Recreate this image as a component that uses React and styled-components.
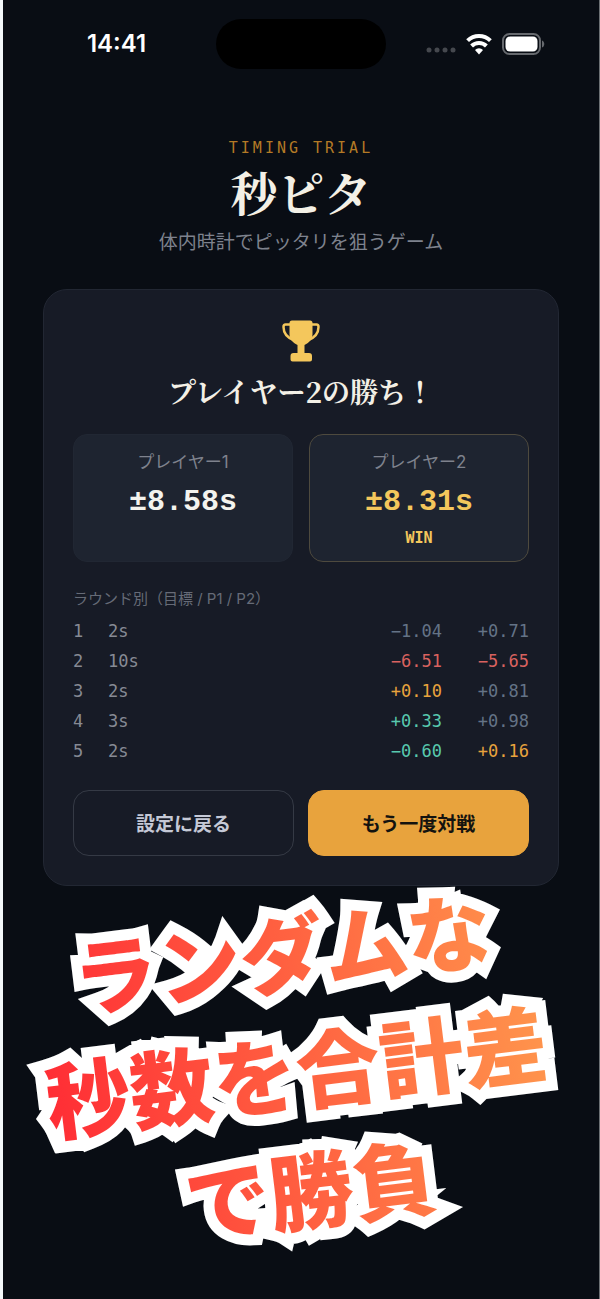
import React from 'react';
import styled, { createGlobalStyle } from 'styled-components';

const GlobalStyle = createGlobalStyle`
  * {
    box-sizing: border-box;
  }
  body {
    margin: 0;
    background: #090d14;
  }
`;

const sans = '"Inter", "Noto Sans CJK JP", sans-serif';
const japanese = '"Noto Sans CJK JP", sans-serif';
const serif = '"Noto Serif CJK JP", "Noto Sans CJK JP", serif';
const mono = '"DejaVu Sans Mono", monospace';
const scoreMono = '"Liberation Mono", monospace';

const Screen = styled.div`
  min-height: 100vh;
  overflow: hidden;
  border-left: 3px solid #f4f8fa;
  border-right: 1px solid #6c7074;
  background: #090d14;
  font-family: ${sans};
`;

const StatusBar = styled.div`
  display: grid;
  grid-template-columns: 1fr 170px 1fr;
  align-items: center;
  padding: 19px 0 0;
`;

const Clock = styled.time`
  padding-left: 14px;
  text-align: center;
  color: #fff;
  font-size: 24px;
  font-weight: 600;
  line-height: 30px;
`;

const Island = styled.div`
  height: 50px;
  border-radius: 25px;
  background: #000;
`;

const StatusIcons = styled.div`
  display: flex;
  align-items: center;
  justify-content: flex-end;
  gap: 10px;
  padding-right: 54px;
`;

const Header = styled.header`
  display: flex;
  flex-direction: column;
  align-items: center;
  margin-top: 69px;
`;

const Eyebrow = styled.p`
  margin: 0;
  color: #b47a26;
  font-family: ${mono};
  font-size: 15px;
  line-height: 20px;
  letter-spacing: 3px;
`;

const Title = styled.h1`
  margin: 3px 0 0;
  color: #f3f0e6;
  font-family: ${serif};
  font-size: 47px;
  font-weight: 700;
  line-height: 60px;
`;

const Subtitle = styled.p`
  margin: 7px 0 0;
  color: #7e828d;
  font-family: ${japanese};
  font-size: 19px;
  line-height: 26px;
`;

const Card = styled.main`
  margin: 35px 40px 0;
  padding: 30px 29px 29px;
  border: 1px solid #222733;
  border-radius: 24px;
  background: #171b26;
`;

const Trophy = styled.svg`
  display: block;
  margin: 0 auto;
`;

const Winner = styled.h2`
  margin: 9px 0 0;
  text-align: center;
  color: #f3f0e6;
  font-family: ${serif};
  font-size: 28px;
  font-weight: 700;
  line-height: 40px;
`;

const Scores = styled.div`
  display: grid;
  grid-template-columns: 1fr 1fr;
  gap: 16px;
  margin-top: 23px;
`;

const ScoreBox = styled.section`
  min-height: 128px;
  padding: 15px 8px 12px;
  border: 1px solid ${(props) => (props.$win ? '#4e4a3e' : '#212733')};
  border-radius: 14px;
  background: #1e2430;
  text-align: center;
`;

const PlayerName = styled.h3`
  margin: 0;
  color: #7e828d;
  font-size: 17px;
  font-weight: 400;
  line-height: 24px;
`;

const ScoreValue = styled.p`
  margin: 9px 0 0;
  color: ${(props) => (props.$win ? '#f4c75c' : '#f3f3ee')};
  font-family: ${scoreMono};
  font-size: 30px;
  font-weight: 700;
  line-height: 38px;
`;

const WinTag = styled.p`
  margin: 7px 0 0;
  color: #f4c75c;
  font-family: ${mono};
  font-size: 15px;
  font-weight: 700;
  line-height: 20px;
`;

const Rounds = styled.table`
  width: 100%;
  margin-top: 24px;
  border-collapse: collapse;
  table-layout: fixed;
  font-family: ${mono};
  font-size: 17px;
`;

const RoundsCaption = styled.caption`
  padding-bottom: 4px;
  text-align: left;
  color: #666b77;
  font-family: ${sans};
  font-size: 15px;
  line-height: 26px;
`;

const RoundCell = styled.td`
  width: ${(props) => props.$width || 'auto'};
  height: 30px;
  padding: 0;
  color: #868a94;
  line-height: 30px;
`;

const tones = {
  plain: '#647386',
  bad: '#d9625f',
  best: '#e8a33d',
  good: '#58c9ae',
};

const DiffCell = styled(RoundCell)`
  text-align: right;
  color: ${(props) => tones[props.$tone]};
`;

const Actions = styled.div`
  display: grid;
  grid-template-columns: 1fr 1fr;
  gap: 14px;
  margin-top: 24px;
`;

const Button = styled.button`
  height: 66px;
  padding: 0 8px 2px;
  border: 1px solid #353a45;
  border-radius: 16px;
  background: transparent;
  color: #c5c9d6;
  font-family: ${japanese};
  font-size: 19px;
  font-weight: 700;
  cursor: pointer;
`;

const PrimaryButton = styled(Button)`
  border-color: #e8a33d;
  background: #e8a33d;
  color: #14130f;
`;

const Tilt = styled.div`
  display: flex;
  justify-content: center;
  margin-top: 3px;
  padding-right: 10px;
  transform: rotate(-7deg);
`;

const Slogan = styled.p`
  position: relative;
  margin: 0;
  background: linear-gradient(90deg, #ff2d35, #ff944c);
  background-clip: text;
  -webkit-text-fill-color: transparent;
  font-family: ${japanese};
  font-size: 84px;
  font-weight: 900;
  line-height: 119px;
  text-align: center;
  white-space: pre;

  /* white outline behind the gradient letters */
  &::before {
    content: attr(data-text);
    position: absolute;
    inset: 0;
    z-index: -1;
    -webkit-text-fill-color: #fff;
    -webkit-text-stroke: 22px #fff;
  }
`;

const slogan = 'ランダムな\n秒数を合計差\nで勝負';

const rounds = [
  { target: '2s', p1: ['−1.04', 'plain'], p2: ['+0.71', 'plain'] },
  { target: '10s', p1: ['−6.51', 'bad'], p2: ['−5.65', 'bad'] },
  { target: '2s', p1: ['+0.10', 'best'], p2: ['+0.81', 'plain'] },
  { target: '3s', p1: ['+0.33', 'good'], p2: ['+0.98', 'plain'] },
  { target: '2s', p1: ['−0.60', 'good'], p2: ['+0.16', 'best'] },
];

const CellularDots = () => (
  <svg width="30" height="20" viewBox="0 0 30 20" fill="#45484e">
    {[3, 11, 19, 27].map((cx) => (
      <circle key={cx} cx={cx} cy="16" r="2.5" />
    ))}
  </svg>
);

const WifiIcon = () => (
  <svg width="26" height="22" viewBox="0 0 26 22" fill="none" stroke="#fff" strokeWidth="4">
    <path d="M1.6 7.6a16.3 16.3 0 0 1 22.8 0" />
    <path d="M5.6 13a10.5 10.5 0 0 1 14.8 0" />
    <path d="M13 21.500l-4-4.500a5.400 5.400 0 0 1 8 0z" fill="#fff" stroke="none" />
  </svg>
);

const BatteryIcon = () => (
  <svg width="43" height="22" viewBox="0 0 43 22">
    <rect x="1" y="1" width="37" height="20" rx="6.5" fill="none" stroke="#66696e" strokeWidth="2" />
    <rect x="3.5" y="3.5" width="32" height="15" rx="4.5" fill="#fff" />
    <path d="M40 7.5c3 1 3 6 0 7z" fill="#66696e" />
  </svg>
);

const TrophyIcon = () => (
  <Trophy width="38" height="42" viewBox="0 0 38 42" fill="#f4c75c">
    <path d="M10 0.5h18q2.5 0 2.5 2.5V14c0 5-3 8.5-8 11v8h4.5q3 0 3 3v3.5q0 2-2 2H10.5q-2 0-2-2V36q0-3 3-3H15.5v-8c-5-2.5-8-6-8-11V3q0-2.5 2.5-2.5z" />
    <path
      d="M8 4.5H3.5Q1.5 4.5 1.5 7c0 7 4 11 11 13.5M30 4.5h4.5q2 0 2 2.5c0 7-4 11-11 13.5"
      fill="none"
      stroke="#f4c75c"
      strokeWidth="2.5"
    />
  </Trophy>
);

const Score = ({ name, value, win }) => (
  <ScoreBox $win={win}>
    <PlayerName>{name}</PlayerName>
    <ScoreValue $win={win}>{value}</ScoreValue>
    {win && <WinTag>WIN</WinTag>}
  </ScoreBox>
);

const RoundTable = () => (
  <Rounds>
    <RoundsCaption>ラウンド別（目標 / P1 / P2）</RoundsCaption>
    <tbody>
      {rounds.map(({ target, p1, p2 }, i) => (
        <tr key={i}>
          <RoundCell $width="35px">{i + 1}</RoundCell>
          <RoundCell>{target}</RoundCell>
          <DiffCell $width="87px" $tone={p1[1]}>{p1[0]}</DiffCell>
          <DiffCell $width="87px" $tone={p2[1]}>{p2[0]}</DiffCell>
        </tr>
      ))}
    </tbody>
  </Rounds>
);

const App = () => (
  <>
    <GlobalStyle />
    <Screen>
      <StatusBar>
        <Clock>14:41</Clock>
        <Island />
        <StatusIcons>
          <CellularDots />
          <WifiIcon />
          <BatteryIcon />
        </StatusIcons>
      </StatusBar>
      <Header>
        <Eyebrow>TIMING TRIAL</Eyebrow>
        <Title>秒ピタ</Title>
        <Subtitle>体内時計でピッタリを狙うゲーム</Subtitle>
      </Header>
      <Card>
        <TrophyIcon />
        <Winner>プレイヤー2の勝ち！</Winner>
        <Scores>
          <Score name="プレイヤー1" value="±8.58s" />
          <Score name="プレイヤー2" value="±8.31s" win />
        </Scores>
        <RoundTable />
        <Actions>
          <Button type="button">設定に戻る</Button>
          <PrimaryButton type="button">もう一度対戦</PrimaryButton>
        </Actions>
      </Card>
      <Tilt>
        <Slogan data-text={slogan}>{slogan}</Slogan>
      </Tilt>
    </Screen>
  </>
);

export default App;
